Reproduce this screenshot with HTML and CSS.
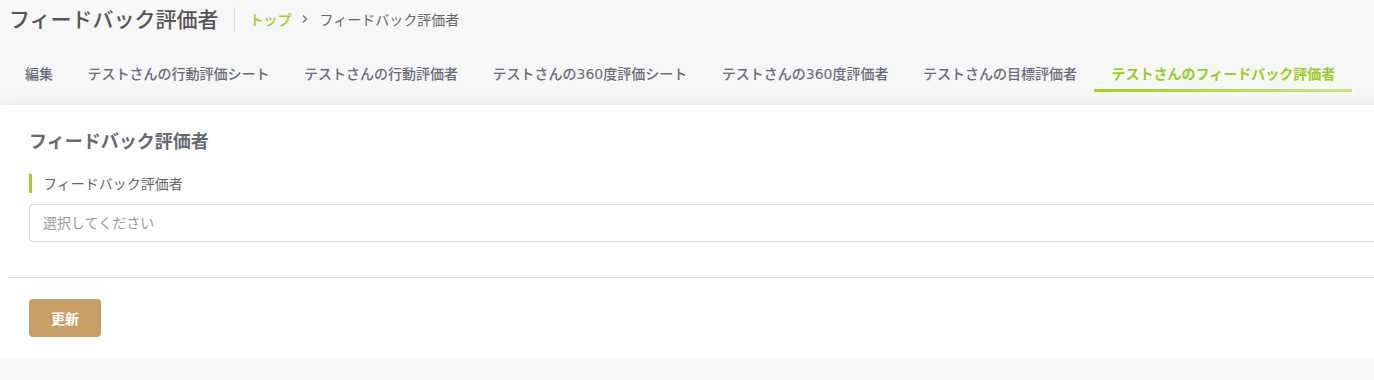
FILE: index.html
```html
<!DOCTYPE html>
<html lang="ja">
<head>
    <meta charset="UTF-8">
    <title>フィードバック評価者</title>
    <link rel="stylesheet" href="styles.css">
</head>
<body>
<header class="page-head">
    <h1 class="page-title">フィードバック評価者</h1>
    <nav class="crumbs">
        <a href="#" class="crumb-link">トップ</a>
        <span class="crumb-sep">
            <svg width="8" height="10" viewBox="0 0 8 10"><path d="M2 1.5 L5.5 5 L2 8.5" fill="none" stroke="#777" stroke-width="1.4"/></svg>
        </span>
        <span class="crumb-now">フィードバック評価者</span>
    </nav>
</header>
<ul class="tabs">
    <li><a href="#">編集</a></li>
    <li><a href="#">テストさんの行動評価シート</a></li>
    <li><a href="#">テストさんの行動評価者</a></li>
    <li><a href="#">テストさんの360度評価シート</a></li>
    <li><a href="#">テストさんの360度評価者</a></li>
    <li><a href="#">テストさんの目標評価者</a></li>
    <li class="cur"><a href="#">テストさんのフィードバック評価者</a></li>
</ul>
<section class="card">
    <div class="card-body">
        <h2 class="card-title">フィードバック評価者</h2>
        <label class="field-label">フィードバック評価者</label>
        <div class="select-box">選択してください</div>
    </div>
    <hr class="card-line">
    <div class="card-foot">
        <button class="btn-save">更新</button>
    </div>
</section>
</body>
</html>
```

FILE: styles.css
```css
body{
    margin: 0;
    background: #f7f7f7;
    font-family: "Noto Sans", "Noto Sans CJK JP", sans-serif;
    color: #666873;
    overflow: hidden;
}
a{text-decoration: none}
.page-head{
    display: flex;
    align-items: center;
    padding: 4px 0 0 9px;
    height: 30px;
}
.page-title{
    margin: 0;
    font-size: 21px;
    font-weight: 500;
    color: #555;
    padding-right: 15px;
    border-right: 1px solid #ddd;
    height: 24px;
    line-height: 24px;
}
.crumbs{
    display: flex;
    align-items: center;
    padding-left: 15px;
    font-size: 14px;
}
.crumb-link{
    color: #9ccc1e;
    font-weight: 500;
}
.crumb-sep{
    display: flex;
    margin: 0 11px 0 9px;
}
.crumb-now{color: #666}
.tabs{
    margin: 30px 0 13px 8px;
    padding: 0;
    list-style: none;
    display: flex;
    gap: 0.5px;
}
.tabs li a{
    display: block;
    padding: 0 17px 5px;
    font-family: "DejaVu Sans", "Noto Sans CJK JP", sans-serif;
    font-size: 14px;
    font-weight: 500;
    line-height: 20px;
    color: #6a6b78;
    border-bottom: 3px solid transparent;
}
.tabs li.cur a{
    color: #9ccc1e;
    font-weight: 700;
    border-image: linear-gradient(to right, #9fd11b, #cce67f) 1;
}
.card{
    width: 1420px;
    background: #fff;
    box-shadow: 0 4px 16px rgba(0,0,0,0.12);
}
.card-body{
    padding: 26px 0 35px 29px;
}
.card-title{
    margin: 0;
    font-size: 18px;
    font-weight: 700;
    line-height: 20px;
    color: #666873;
}
.field-label{
    display: block;
    margin-top: 23px;
    padding-left: 11px;
    border-left: 3px solid #a5d31f;
    font-size: 14px;
    line-height: 19px;
    color: #666;
}
.select-box{
    margin-top: 11px;
    height: 36px;
    line-height: 36px;
    padding-left: 13px;
    border: 1px solid #d6d6dc;
    border-radius: 4px;
    font-size: 14px;
    color: #999;
}
.card-line{
    margin: 0 0 0 8px;
    border: 0;
    border-top: 1px solid #dcdcdc;
}
.card-foot{
    padding: 21px 0 20px 29px;
}
.btn-save{
    width: 72px;
    height: 38px;
    border: 0;
    border-radius: 4px;
    background: #c9a063;
    color: #fff;
    font-family: inherit;
    font-size: 14px;
    font-weight: 700;
}
```
